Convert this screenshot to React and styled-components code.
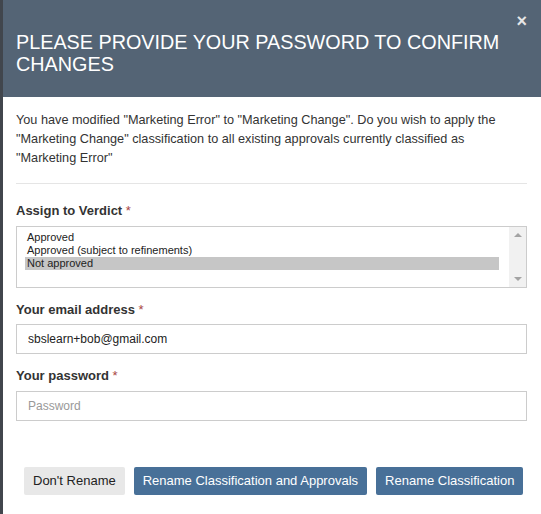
import React from "react";
import styled, { createGlobalStyle } from "styled-components";

const colors = {
  header: "#546475",
  text: "#333333",
  border: "#cccccc",
  primary: "#487098",
  required: "#a94442",
};

const GlobalStyle = createGlobalStyle`
  html, body {
    margin: 0;
    padding: 0;
    background: #41464d;
  }
  body {
    font-family: "Liberation Sans", Arial, sans-serif;
    color: ${colors.text};
  }
`;

const Page = styled.div`
  display: flex;
  min-height: 514px;
  padding-left: 3px;
`;

const Modal = styled.div`
  flex: 1;
  background: #ffffff;
  display: flex;
  flex-direction: column;
`;

const Header = styled.div`
  background: ${colors.header};
  display: flex;
  align-items: flex-start;
  padding: 0 14px 22px 13px;
`;

const Title = styled.h4`
  flex: 1;
  margin: 0;
  padding-top: 31px;
  font-size: 19.8px;
  line-height: 22px;
  font-weight: normal;
  color: #ffffff;
  text-transform: uppercase;
`;

const Close = styled.button`
  border: 0;
  background: none;
  padding: 0;
  margin-top: 11px;
  color: #e6e6e6;
  font-family: "Liberation Sans", Arial, sans-serif;
  font-size: 18px;
  font-weight: bold;
  line-height: 20px;
  cursor: pointer;
`;

const Body = styled.div`
  padding: 14px 14px 0 13px;
`;

const Message = styled.p`
  margin: 0;
  font-size: 12.7px;
  line-height: 19px;
`;

const Divider = styled.hr`
  margin: 15px 0 18px;
  border: 0;
  border-top: 1px solid #e5e5e5;
`;

const Group = styled.div`
  margin-bottom: 13px;
`;

const Label = styled.label`
  display: block;
  margin-bottom: 5px;
  font-size: 13px;
  line-height: 18.5px;
  font-weight: bold;
`;

const Required = styled.span`
  color: ${colors.required};
  font-weight: normal;
`;

const ListBox = styled.div`
  display: flex;
  height: 60px;
  border: 1px solid ${colors.border};
`;

const Options = styled.div`
  flex: 1;
  padding: 4px 10px 0 8px;
`;

const Option = styled.div`
  font-size: 11px;
  line-height: 13px;
  padding-left: 2px;
  color: #222;
  background: ${(p) => (p.$selected ? "#c6c6c6" : "transparent")};
`;

const Scrollbar = styled.div`
  width: 17px;
  background: #f1f1f1;
  display: flex;
  flex-direction: column;
  justify-content: space-between;
  align-items: center;
  padding: 6px 0 6px;
`;

const Arrow = styled.span`
  width: 0;
  height: 0;
  border-left: 4px solid transparent;
  border-right: 4px solid transparent;
  ${(p) =>
    p.$down
      ? "border-top: 4px solid #a3a3a3;"
      : "border-bottom: 4px solid #a3a3a3;"}
`;

const Input = styled.input`
  display: block;
  box-sizing: border-box;
  width: 100%;
  height: 30px;
  padding: 0 11px;
  border: 1px solid ${colors.border};
  border-radius: 0;
  font-family: "Liberation Sans", Arial, sans-serif;
  font-size: 12px;
  color: #222;
  outline: none;

  &::placeholder {
    color: #999;
  }
`;

const Footer = styled.div`
  display: flex;
  gap: 9px;
  padding: 33px 0 0 21px;
`;

const Button = styled.button`
  height: 28px;
  padding: 0 9px;
  border: 0;
  border-radius: 2px;
  font-family: "Liberation Sans", Arial, sans-serif;
  font-size: 13px;
  background: ${(p) => (p.$primary ? colors.primary : "#e8e8e8")};
  color: ${(p) => (p.$primary ? "#ffffff" : "#222222")};
  cursor: pointer;
`;

const verdicts = ["Approved", "Approved (subject to refinements)", "Not approved"];

export default function App() {
  return (
    <>
      <GlobalStyle />
      <Page>
        <Modal>
          <Header>
            <Title>Please provide your password to confirm changes</Title>
            <Close aria-label="Close">×</Close>
          </Header>
          <Body>
            <Message>
              You have modified "Marketing Error" to "Marketing Change". Do you wish to apply the
              "Marketing Change" classification to all existing approvals currently classified as
              "Marketing Error"
            </Message>
            <Divider />
            <Group>
              <Label>
                Assign to Verdict <Required>*</Required>
              </Label>
              <ListBox>
                <Options>
                  {verdicts.map((v) => (
                    <Option key={v} $selected={v === "Not approved"}>
                      {v}
                    </Option>
                  ))}
                </Options>
                <Scrollbar>
                  <Arrow />
                  <Arrow $down />
                </Scrollbar>
              </ListBox>
            </Group>
            <Group>
              <Label>
                Your email address <Required>*</Required>
              </Label>
              <Input type="email" defaultValue="sbslearn+bob@gmail.com" />
            </Group>
            <Group>
              <Label>
                Your password <Required>*</Required>
              </Label>
              <Input type="password" placeholder="Password" />
            </Group>
          </Body>
          <Footer>
            <Button>Don't Rename</Button>
            <Button $primary>Rename Classification and Approvals</Button>
            <Button $primary>Rename Classification</Button>
          </Footer>
        </Modal>
      </Page>
    </>
  );
}
